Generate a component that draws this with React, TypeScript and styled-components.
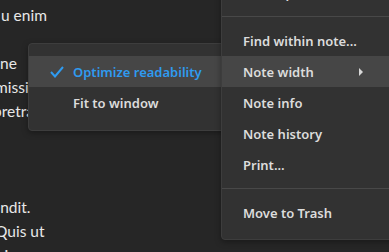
import styled, { createGlobalStyle } from "styled-components";

const GlobalStyle = createGlobalStyle`
  html, body {
    margin: 0;
    padding: 0;
    background: #262626;
    overflow: hidden;
  }
`;

const lines: { text: string; shift: number }[] = [
  { text: "u enim", shift: 1 },
  { text: "", shift: 0 },
  { text: "ne", shift: 0 },
  { text: "missin", shift: -5 },
  { text: "pretra", shift: -7 },
  { text: "", shift: 0 },
  { text: "", shift: 0 },
  { text: "", shift: 0 },
  { text: "endit.", shift: -8 },
  { text: "Quis ut", shift: -5 },
  { text: "aliquip", shift: -28 },
];

const mainItems = [
  { label: "Find within note...", active: false, sub: false },
  { label: "Note width", active: true, sub: true },
  { label: "Note info", active: false, sub: false },
  { label: "Note history", active: false, sub: false },
  { label: "Print...", active: false, sub: false },
];

const App = () => {
  return (
    <Page>
      <GlobalStyle />
      <Editor>
        {lines.map((line, i) => (
          <Line key={i} $shift={line.shift}>
            {line.text || "\u00a0"}
          </Line>
        ))}
      </Editor>

      <SubMenu>
        <Item $active>
          <Check>
            <svg width="14" height="12" viewBox="0 0 14 12">
              <polyline
                points="1,6 5,10.5 13,1"
                fill="none"
                stroke="#2f9bf0"
                strokeWidth="2"
              />
            </svg>
          </Check>
          <Label $selected>Optimize readability</Label>
        </Item>
        <Item>
          <Check />
          <Label>Fit to window</Label>
        </Item>
      </SubMenu>

      <MainMenu>
        <Item>
          <Label>Note options</Label>
        </Item>
        <Separator />
        {mainItems.map((item) => (
          <Item key={item.label} $active={item.active}>
            <Label>{item.label}</Label>
            {item.sub && <Arrow />}
          </Item>
        ))}
        <Separator />
        <Item>
          <Label>Move to Trash</Label>
        </Item>
      </MainMenu>
    </Page>
  );
};

const Page = styled.div`
  position: relative;
  width: 389px;
  height: 252px;
  overflow: hidden;
  background: #262626;
  font-family: "Noto Sans", "Open Sans", sans-serif;
`;

const Editor = styled.div`
  padding-top: 3px;
  color: #e8e8e8;
  font-family: Lato, "Noto Sans", sans-serif;
  font-size: 15.5px;
`;

const Line = styled.div<{ $shift: number }>`
  height: 24px;
  line-height: 24px;
  margin-left: ${(p) => p.$shift}px;
  white-space: nowrap;
`;

const SubMenu = styled.div`
  position: absolute;
  left: 28px;
  top: 43px;
  width: 200px;
  padding: 12px 0;
  background: #323232;
  border: 1px solid #3d3d3d;
  border-radius: 4px;
  box-shadow: 0 2px 6px rgba(0, 0, 0, 0.35);
  z-index: 1;
`;

const MainMenu = styled.div`
  position: absolute;
  left: 221px;
  top: -24px;
  width: 200px;
  padding-bottom: 11px;
  background: #323232;
  border: 1px solid #3d3d3d;
  border-radius: 4px;
  box-shadow: 0 2px 6px rgba(0, 0, 0, 0.35);
  z-index: 2;
`;

const Item = styled.div<{ $active?: boolean }>`
  display: flex;
  align-items: center;
  height: 31px;
  padding-left: 21px;
  background: ${(p) => (p.$active ? "#464646" : "transparent")};
`;

const Check = styled.span`
  display: flex;
  width: 23px;
  align-items: center;
`;

const Label = styled.span<{ $selected?: boolean }>`
  flex: 1;
  font-size: 13px;
  font-weight: 600;
  color: ${(p) => (p.$selected ? "#2f9bf0" : "#dcdcdc")};
  white-space: nowrap;
`;

const Arrow = styled.span`
  width: 0;
  height: 0;
  margin-right: 59px;
  border-top: 4px solid transparent;
  border-bottom: 4px solid transparent;
  border-left: 4px solid #d8d8d8;
`;

const Separator = styled.div`
  height: 1px;
  margin: 8px 0;
  background: #484848;
`;

export default App;
